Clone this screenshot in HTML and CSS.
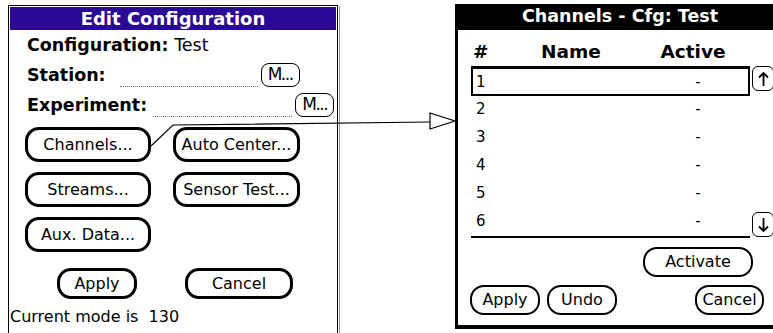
FILE: index.html
```html
<!DOCTYPE html>
<html>
<head>
    <title>Edit Configuration</title>
    <link rel="stylesheet" href="styles.css">
</head>
<body>
<div class="scene">
    <section class="edit">
        <h1 class="edit-title">Edit Configuration</h1>
        <div class="fields">
            <p class="field"><b>Configuration:</b>&nbsp;Test</p>
            <p class="field"><b>Station:</b><span class="dots station-dots"></span><span class="mini">M...</span></p>
            <p class="field"><b>Experiment:</b><span class="dots exp-dots"></span><span class="mini">M...</span></p>
        </div>
        <div class="btn-grid">
            <span class="btn">Channels...</span>
            <span class="btn">Auto Center...</span>
            <span class="btn">Streams...</span>
            <span class="btn">Sensor Test...</span>
            <span class="btn">Aux. Data...</span>
        </div>
        <div class="edit-actions">
            <span class="btn btn-apply">Apply</span>
            <span class="btn btn-cancel">Cancel</span>
        </div>
        <p class="status">Current mode is &nbsp;130</p>
    </section>

    <section class="channels">
        <h2 class="ch-title">Channels - Cfg: Test</h2>
        <div class="ch-body">
            <div class="ch-head">
                <span>#</span><span>Name</span><span>Active</span>
            </div>
            <div class="ch-list">
                <div class="ch-table">
                    <div class="ch-row selected"><span>1</span><span></span><span>-</span></div>
                    <div class="ch-row"><span>2</span><span></span><span>-</span></div>
                    <div class="ch-row"><span>3</span><span></span><span>-</span></div>
                    <div class="ch-row"><span>4</span><span></span><span>-</span></div>
                    <div class="ch-row"><span>5</span><span></span><span>-</span></div>
                    <div class="ch-row"><span>6</span><span></span><span>-</span></div>
                </div>
                <div class="scroller">
                    <span class="arrow">
                        <svg width="19" height="20" viewBox="0 0 19 20"><path d="M9.5 4 V17 M5 8.5 L9.5 4 L14 8.5" fill="none" stroke="#000" stroke-width="1.8"/></svg>
                    </span>
                    <span class="arrow">
                        <svg width="19" height="20" viewBox="0 0 19 20"><path d="M9.5 3 V16 M5 11.5 L9.5 16 L14 11.5" fill="none" stroke="#000" stroke-width="1.8"/></svg>
                    </span>
                </div>
            </div>
            <div class="ch-activate">
                <span class="pbtn activate">Activate</span>
            </div>
            <div class="ch-actions">
                <span class="pbtn w70">Apply</span>
                <span class="pbtn w70">Undo</span>
                <span class="pbtn cancel">Cancel</span>
            </div>
        </div>
    </section>

    <!-- callout from the Channels button to the second screen -->
    <svg class="callout" width="773" height="333" viewBox="0 0 773 333">
        <polyline points="151,146 173,125 430,122" fill="none" stroke="#000" stroke-width="1.2"/>
        <polygon points="430,113 455,121 430,129" fill="#fff" stroke="#000" stroke-width="1.2"/>
    </svg>
</div>
</body>
</html>
```

FILE: styles.css
```css
* {
    box-sizing: border-box;
}

body {
    margin: 0;
    background: #fff;
    font-family: "DejaVu Sans", "Liberation Sans", sans-serif;
    color: #000;
}

.scene {
    position: relative;
    display: flex;
    align-items: flex-start;
    width: 773px;
    height: 333px;
    overflow: hidden;
}

/* left screen */
.edit {
    margin: 5px 0 0 8px;
    width: 330px;
    height: 340px;
    flex-shrink: 0;
    border: 1px solid #000;
    box-shadow: 2px 0 0 -1px #fff, 3px 0 0 -1px #999;
    padding: 1px;
}

.edit-title {
    margin: 0;
    height: 23px;
    background: #2a0a94;
    color: #fff;
    font-size: 18px;
    line-height: 23px;
    text-align: center;
}

.fields {
    padding-left: 17px;
}

.field {
    margin: 0;
    height: 30px;
    display: flex;
    align-items: center;
    font-size: 17.5px;
}

.dots {
    display: inline-block;
    height: 1px;
    margin-top: 22px;
    border-bottom: 1px dotted #777;
}

.station-dots {
    width: 138px;
    margin-left: 14px;
}

.exp-dots {
    width: 139px;
    margin-left: 6px;
}

.mini {
    margin-left: 3px;
    width: 39px;
    height: 24px;
    border: 1.5px solid #000;
    border-radius: 8px;
    font-size: 17px;
    letter-spacing: -1.5px;
    line-height: 21px;
    text-align: center;
}

.btn-grid {
    margin: 7px 0 0 15px;
    display: grid;
    grid-template-columns: 126px 127px;
    column-gap: 22px;
    row-gap: 10px;
}

.btn {
    height: 35px;
    border: 3px solid #000;
    border-radius: 14px;
    font-size: 16px;
    line-height: 29px;
    text-align: center;
}

.edit-actions {
    margin: 16px 0 0 47px;
    display: flex;
    gap: 48px;
}

.btn-apply {
    width: 80px;
    height: 31px;
    line-height: 25px;
}

.btn-cancel {
    width: 108px;
    height: 31px;
    line-height: 25px;
}

.status {
    margin: 8px 0 0;
    font-size: 16px;
    line-height: 20px;
}

/* right screen */
.channels {
    margin: 4px 0 0 117px;
    width: 330px;
    height: 325px;
    flex-shrink: 0;
    border: 3px solid #000;
    border-top: 0;
    border-bottom-width: 4px;
}

.ch-title {
    margin: 0;
    height: 26px;
    background: #000;
    color: #fff;
    font-size: 17.5px;
    line-height: 25px;
    text-align: center;
}

.ch-body {
    padding-left: 13px;
}

.ch-head,
.ch-row {
    display: grid;
    grid-template-columns: 50px 100px 129px;
}

.ch-head {
    margin-top: 11px;
    height: 22px;
    width: 279px;
    font-weight: bold;
    font-size: 18.5px;
    line-height: 22px;
}

.ch-head span:nth-child(1) {
    padding-left: 2px;
}

.ch-head span:nth-child(2) {
    text-align: center;
}

.ch-head span:nth-child(3) {
    padding-left: 15px;
    text-align: center;
}

.ch-row span:nth-child(3) {
    padding-left: 25px;
    text-align: center;
}

.ch-list {
    margin-top: 3px;
    display: flex;
    gap: 2px;
}

.ch-table {
    width: 279px;
    border-top: 3px solid #000;
    border-bottom: 2px solid #000;
}

.ch-row {
    height: 28px;
    font-size: 15px;
    line-height: 26px;
}

.ch-row span:nth-child(1) {
    padding-left: 5px;
}

.ch-row.selected {
    margin-top: -2px;
    border: 2px solid #000;
    height: 29px;
}

.ch-row.selected span:nth-child(1) {
    padding-left: 3px;
}

.ch-row.selected span:nth-child(3) {
    padding-left: 21px;
}

.scroller {
    display: flex;
    flex-direction: column;
    justify-content: space-between;
    padding-bottom: 1px;
}

.arrow {
    display: flex;
    align-items: center;
    justify-content: center;
    width: 22px;
    height: 25px;
    border: 1.5px solid #000;
    border-radius: 6px;
}

.pbtn {
    height: 30px;
    border: 2.5px solid #000;
    border-radius: 14px;
    font-size: 16px;
    line-height: 25px;
    text-align: center;
}

.ch-activate {
    margin-top: 9px;
    width: 282px;
    display: flex;
    justify-content: flex-end;
}

.activate {
    width: 110px;
}

.ch-actions {
    margin: 8px 0 0 -1px;
    display: flex;
    gap: 7px;
}

.w70 {
    width: 70px;
}

.cancel {
    width: 69px;
    margin-left: 71px;
}

.callout {
    position: absolute;
    top: 0;
    left: 0;
    pointer-events: none;
}
```
